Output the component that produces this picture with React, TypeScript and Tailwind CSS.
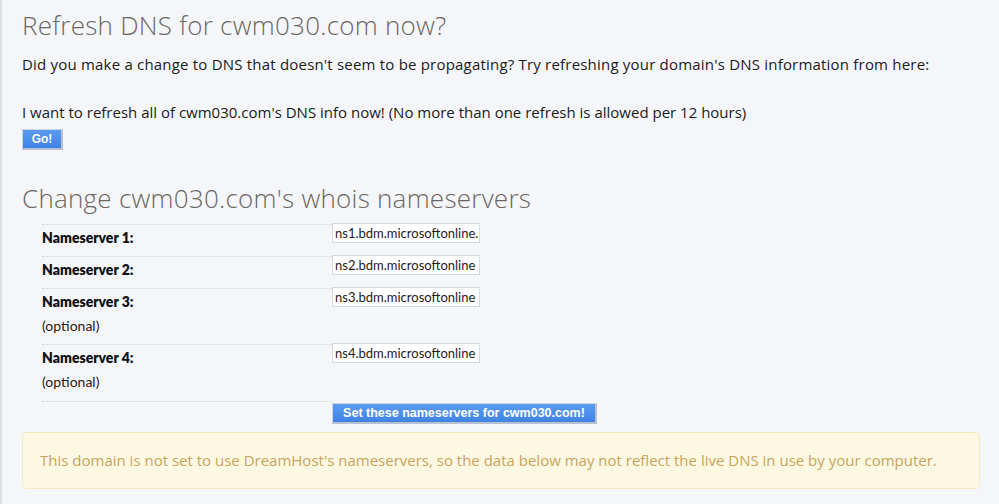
import React from "react";

const body = { fontFamily: "'Open Sans', Lato, Arial, sans-serif" };

function Btn({ children, className = "" }: { children: React.ReactNode; className?: string }) {
  return (
    <button
      className={`h-[21px] bg-gradient-to-b from-[#5b9cf0] to-[#3f82e6] text-white font-bold border border-[#c9d4e4] border-r-[2px] border-b-[2px] border-r-[#b7c1cf] border-b-[#b7c1cf] leading-none ${className}`}
      style={{ fontFamily: "'Liberation Sans', Arial, sans-serif" }}
    >
      {children}
    </button>
  );
}

function Row({ label, optional, value, h }: { label: string; optional?: boolean; value: string; h: string }) {
  return (
    <div className={`flex ${h}`}>
      <div className="w-[290px] border-t border-dotted border-[#cfd5dd] pt-[3px]">
        <div className="text-[14px] font-extrabold text-[#111] leading-[20px]" style={{ fontFamily: "Lato, sans-serif" }}>{label}</div>
        {optional && <div className="text-[14px] text-[#222] mt-[4px] leading-[20px]" style={{ fontFamily: "Lato, sans-serif" }}>(optional)</div>}
      </div>
      <div>
        <div className="w-[148px] h-[20px] bg-white border border-[#d4dae2] text-[13px] text-[#222] leading-[18px] px-[2px] overflow-hidden whitespace-nowrap -mt-[1px]" style={{ fontFamily: "Lato, sans-serif" }}>
          {value}
        </div>
      </div>
    </div>
  );
}

export default function App() {
  return (
    <div className="w-[999px] h-[504px] bg-[#f4f6fa] border-l-2 border-[#dde1e7] overflow-hidden" style={body}>
      <div className="pl-[20px] pt-[9px]">
        <h1
          className="text-[26px] font-light text-[#6d6863] tracking-[0.25px] leading-[32px]"
          style={{ fontFamily: "'Open Sans', sans-serif" }}
        >
          Refresh DNS for cwm030.com now?
        </h1>
        <p className="mt-[13px] text-[15px] text-[#1b1b1b] leading-[20px] tracking-[0.2px]">
          Did you make a change to DNS that doesn't seem to be propagating? Try refreshing your domain's DNS information from here:
        </p>
        <p className="mt-[28px] text-[15px] text-[#1b1b1b] leading-[20px]">
          I want to refresh all of cwm030.com's DNS info now! (No more than one refresh is allowed per 12 hours)
        </p>
        <Btn className="mt-[7px] w-[41px] text-[12px]">Go!</Btn>

        <h2
          className="mt-[32px] text-[26px] font-light text-[#6d6863] tracking-[0.25px] leading-[32px]"
          style={{ fontFamily: "'Open Sans', sans-serif" }}
        >
          Change cwm030.com's whois nameservers
        </h2>

        <div className="ml-[20px] mt-[10px]">
          <Row label="Nameserver 1:" value="ns1.bdm.microsoftonline." h="h-[32px]" />
          <Row label="Nameserver 2:" value="ns2.bdm.microsoftonline" h="h-[32px]" />
          <Row label="Nameserver 3:" optional value="ns3.bdm.microsoftonline" h="h-[56px]" />
          <Row label="Nameserver 4:" optional value="ns4.bdm.microsoftonline" h="h-[57px]" />
          <div className="flex">
            <div className="w-[290px] border-t border-dotted border-[#cfd5dd]" />
            <Btn className="mt-[2px] w-[265px] text-[12.5px]">Set these nameservers for cwm030.com!</Btn>
          </div>
        </div>

        <div className="mt-[8px] w-[958px] h-[57px] bg-[#fdf8e2] border border-dotted border-[#ecd9a0] rounded-[5px] flex items-center pl-[17px]">
          <span className="text-[15px] text-[#c9a45f]">
            This domain is not set to use DreamHost's nameservers, so the data below may not reflect the live DNS in use by your computer.
          </span>
        </div>
      </div>
    </div>
  );
}
